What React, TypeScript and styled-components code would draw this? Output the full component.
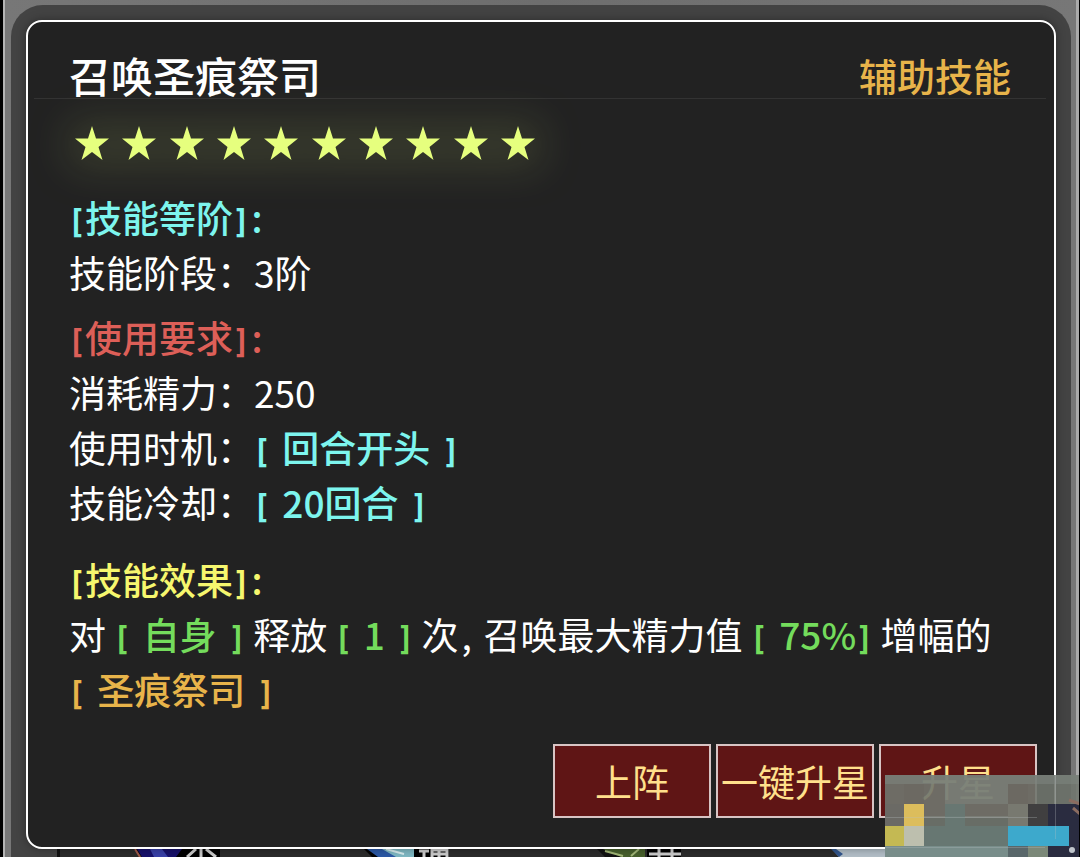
import React from 'react';
import styled, { createGlobalStyle } from 'styled-components';

const colors = {
  cyan: '#7df5ee',
  red: '#dd5f58',
  yellow: '#f6f76e',
  green: '#74dc5c',
  gold: '#e8b44a',
};
type Tone = keyof typeof colors;

const GlobalStyle = createGlobalStyle`
  * { box-sizing: border-box; }
  body {
    margin: 0;
    background: #727272;
    font-family: "Noto Sans CJK SC", "Noto Sans", sans-serif;
    color: #fff;
  }
`;

const Page = styled.div`
  position: relative;
  min-height: 100vh;
  overflow: hidden;
  padding: 5px 8px 0;
  border-left: 3px solid #000;
  border-right: 1px solid #000;
  background: linear-gradient(90deg, #b4b4b4 2px, #777 2px, #6e6e6e 50%, #777 calc(100% - 3px), #aaa calc(100% - 3px));
`;

const Backdrop = styled.div`
  padding: 15px 15px 0;
  border-radius: 32px 32px 0 0;
  background: #434343;
`;

const Card = styled.main`
  position: relative;
  z-index: 1;
  padding: 29px 17px 29px 41px;
  border: 2px solid #fff;
  border-radius: 16px;
  background: #222;
  box-shadow: 0 0 10px rgba(0, 0, 0, 0.35);
`;

const Header = styled.header`
  display: flex;
  justify-content: space-between;
  align-items: center;
  height: 48px;
  margin: 0 -9px 0 -35px;
  padding: 0 35px;
  border-bottom: 1px solid #333;
`;

const Title = styled.h1`
  margin: 0;
  font-size: 42px;
  line-height: 48px;
  font-weight: 500;
`;

const Kind = styled.span`
  font-size: 38px;
  line-height: 48px;
  font-weight: 500;
  color: ${colors.gold};
`;

const Stars = styled.div`
  display: flex;
  justify-content: space-between;
  width: 462px;
  margin: 26px 0 29px 5px;
  filter: drop-shadow(0 0 24px rgba(230, 255, 126, 0.65));
`;

const Star = styled.svg`
  width: 36px;
  height: 36px;
  fill: #e6ff7e;
`;

const Section = styled.section`
  font-size: 37px;
  line-height: 55px;
  & + & { margin-top: 10px; }
  & + &:last-of-type { margin-top: 22px; }
`;

const Heading = styled.h2<{ $tone: Tone }>`
  margin: 0;
  font-size: 37px;
  line-height: 55px;
  font-weight: 500;
  color: ${(p) => colors[p.$tone]};
`;

const Line = styled.p`
  margin: 0;
`;

const Mark = styled.span<{ $tone: Tone }>`
  font-weight: 500;
  color: ${(p) => colors[p.$tone]};
`;

const Value = styled.span<{ $flushEnd?: boolean }>`
  margin: 0 ${(p) => (p.$flushEnd ? 0 : 4)}px 0 4px;
`;

const Bracket = styled.span`
  display: inline-block;
  width: 16px;
  font-family: Inter, sans-serif;
  font-size: 32px;
  line-height: 40px;
  font-weight: 600;
  text-align: center;
`;

const Colon = styled.span`
  display: inline-block;
  width: 16px;
  text-align: center;
`;

const Comma = styled.span`
  display: inline-block;
  width: 25px;
  padding-left: 3px;
`;

const Actions = styled.div`
  display: flex;
  justify-content: flex-end;
  gap: 5px;
  margin-top: 27px;
`;

const Action = styled.button`
  width: 158px;
  height: 74px;
  padding: 0;
  border: 2px solid #d8c4c4;
  background: #5f1515;
  color: #ffe08c;
  font: 400 37px/55px "Noto Sans CJK SC", sans-serif;
  white-space: nowrap;
`;

const SkillStrip = styled.div`
  display: grid;
  grid-template-columns: repeat(4, 1fr);
  height: 8px;
  margin: 0 31px;
  padding-right: 36px;
  overflow: hidden;
  border-left: 3px solid #111;
  background: #2b2b2b;
`;

const SkillThumb = styled.svg`
  display: block;
  width: 88px;
  height: 8px;
  margin-left: 72px;
`;

const Mosaic = styled.svg`
  position: absolute;
  z-index: 2;
  right: -1px;
  bottom: 0;
  width: 195px;
  height: 82px;
`;

const Tagged = ({ tone, children }: { tone: Tone; children: React.ReactNode }) => (
  <Mark $tone={tone}>
    <Bracket>[</Bracket> <Value>{children}</Value> <Bracket>]</Bracket>
  </Mark>
);

const SectionTitle = ({ tone, children }: { tone: Tone; children: React.ReactNode }) => (
  <Heading $tone={tone}>
    <Bracket>[</Bracket>{children}<Bracket>]</Bracket>
    <Colon>:</Colon>
  </Heading>
);

export default function App() {
  return (
    <Page>
      <GlobalStyle />
      <Backdrop>
        <Card>
          <Header>
            <Title>召唤圣痕祭司</Title>
            <Kind>辅助技能</Kind>
          </Header>
          <Stars role="img" aria-label="10">
            {Array.from({ length: 10 }, (_, i) => (
              <Star key={i} viewBox="0 0 36 36" aria-hidden="true">
                <path d="M18 1l4 12.500h13l-10.500 8.500 4 13-10.500-8-10.500 8 4-13L1 13.500h13z" />
              </Star>
            ))}
          </Stars>
          <Section>
            <SectionTitle tone="cyan">技能等阶</SectionTitle>
            <Line>技能阶段：3阶</Line>
          </Section>
          <Section>
            <SectionTitle tone="red">使用要求</SectionTitle>
            <Line>消耗精力：250</Line>
            <Line>使用时机：<Tagged tone="cyan">回合开头</Tagged></Line>
            <Line>技能冷却：<Tagged tone="cyan">20回合</Tagged></Line>
          </Section>
          <Section>
            <SectionTitle tone="yellow">技能效果</SectionTitle>
            <Line>
              对 <Tagged tone="green">自身</Tagged> 释放 <Tagged tone="green">1</Tagged> 次<Comma>,</Comma>召唤最大精力值{' '}
              <Mark $tone="green"><Bracket>[</Bracket> <Value $flushEnd>75%</Value><Bracket>]</Bracket></Mark> 增幅的
              <br />
              <Tagged tone="gold">圣痕祭司</Tagged>
            </Line>
          </Section>
          <Actions>
            <Action type="button">上阵</Action>
            <Action type="button">一键升星</Action>
            <Action type="button">升星</Action>
          </Actions>
        </Card>
        <SkillStrip aria-hidden="true">
          <SkillThumb viewBox="0 0 88 8">
            <path fill="#000" d="M2 0h86v8H10z" />
            <path fill="#17116b" d="M5 0h45l-6 8H10z" />
            <path fill="#3940a8" d="M18 0h12l6 8H22z" />
            <path stroke="#a05a4a" strokeWidth="2" d="M3 0l5 8" />
            <path stroke="#ccc" strokeWidth="3" fill="none" d="M64 0l-9 8M69 0v8M74 0l10 8" />
          </SkillThumb>
          <SkillThumb viewBox="0 0 88 8">
            <path fill="#000" d="M0 0h85v8H8z" />
            <path fill="#7fb9c4" d="M5 0h45v8H18z" />
            <path fill="#2b58a5" d="M3 0h15l14 8H14z" />
            <path stroke="#d8eef0" strokeWidth="2" d="M22 0l18 5" />
            <path stroke="#ccc" strokeWidth="3" fill="none" d="M55 2h10M60 2v6M68 8V1h15v7M75 0v8M68 5h15" />
          </SkillThumb>
          <SkillThumb viewBox="0 0 88 8">
            <path fill="#111" d="M0 0h48v8H8z" />
            <path fill="#47602c" d="M6 0h42v8H24z" />
            <path stroke="#a3b878" strokeWidth="2" d="M8 2l18 5M34 7l8-7" />
            <path fill="#000" d="M50 0h34v8H50z" />
            <path stroke="#ccc" strokeWidth="3" fill="none" d="M52 5h32M62 0v8M75 0v8" />
          </SkillThumb>
          <SkillThumb viewBox="0 0 88 8">
            <path fill="#b3bfc8" d="M3 0h85v8H10z" />
            <path fill="#32568d" d="M2 0h5l7 5-4 3z" />
          </SkillThumb>
        </SkillStrip>
      </Backdrop>
      <Mosaic viewBox="0 0 195 82" aria-hidden="true" shapeRendering="crispEdges">
        <path fill="#70756e" fillOpacity=".9" d="M0 0h195v82H0z" />
        <path fill="#7f8882" fillOpacity=".5" d="M0 0h195v9H0zM60 9h63v20H60z" />
        <path fill="#69665f" d="M19 9h20v20H19zM123 9h20v20h-20z" fillOpacity=".5" />
        <path fill="#677b77" fillOpacity=".75" d="M39 51h84v31H39zM60 29h20v22H60z" />
        <path fill="#6b6a65" d="M0 29h19v22H0z" />
        <path fill="#dcbd5c" d="M19 29h20v22H19z" />
        <path fill="#c4b953" d="M0 51h19v20H0z" />
        <path fill="#bdbfae" d="M19 51h20v20H19z" />
        <path fill="#787970" d="M123 29h20v22h-20z" />
        <path fill="#403f40" d="M143 29h20v22h-20z" />
        <path fill="#2a2c40" d="M163 29h32v53h-32z" />
        <path fill="#3da9cc" d="M123 51h61v20h-61z" />
        <path fill="#788d8a" d="M0 71h123v11H0z" />
        <path fill="#59676a" d="M123 71h20v11h-20z" />
        <path fill="#7b8878" d="M143 71h20v11h-20z" />
        <path fill="#b8c0c4" fillOpacity=".3" d="M0 42h152v1H0zM170 0h1v64h-1zM0 72h160v1H0z" />
        <path stroke="#8b6c60" strokeWidth="3" d="M184 25l11 4M188 33l7 6" shapeRendering="auto" />
        <circle cx="187" cy="75" r="3" fill="#c0c6cc" shapeRendering="auto" />
      </Mosaic>
    </Page>
  );
}
